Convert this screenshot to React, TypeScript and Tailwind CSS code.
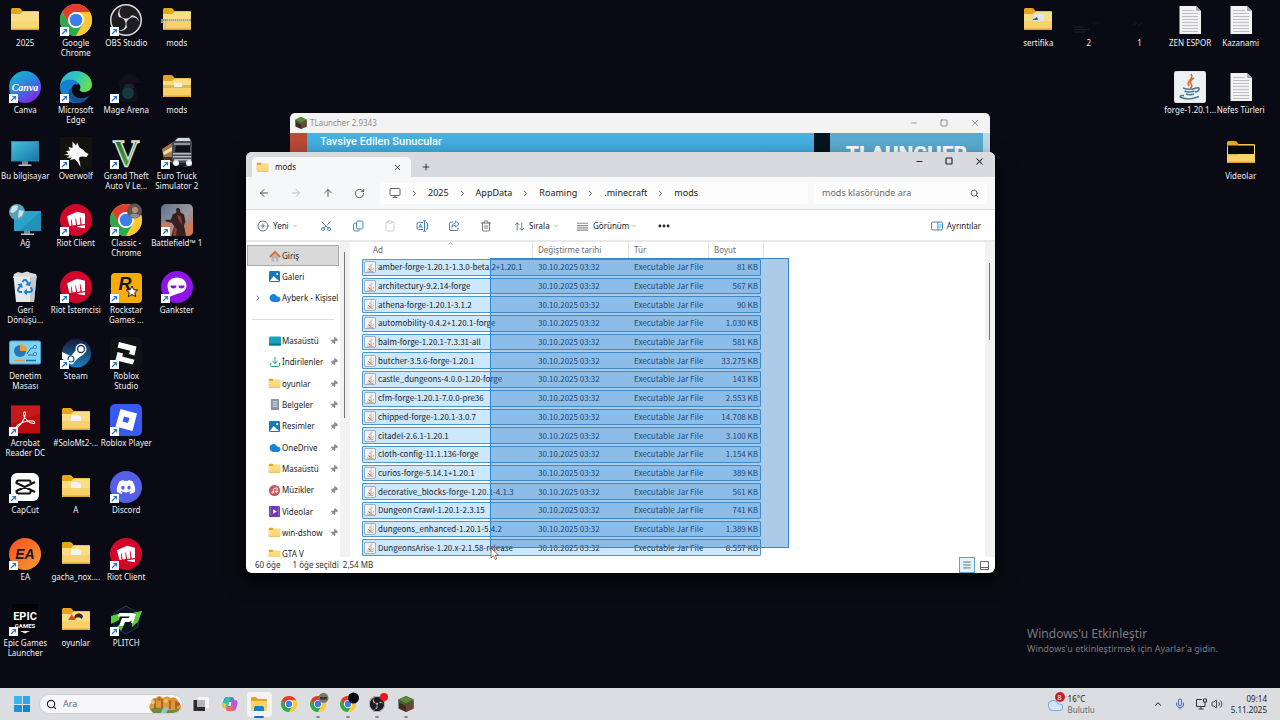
import type { ReactNode } from "react";
import {
  ArrowLeft, ArrowRight, ArrowUp, RotateCw, Monitor, ChevronRight, ChevronDown, ChevronUp, Search, X, Plus, Minus,
  Square, CirclePlus, Scissors, Copy, Clipboard, Trash2, ArrowUpDown, Ellipsis, PanelRight, Pin, Mic, Volume2,
  Cloud, Download, Music, Menu,
} from "lucide-react";
import { FaJava, FaDiscord, FaSteamSymbol, FaRecycle } from "react-icons/fa";
import { SiRiotgames, SiObsstudio } from "react-icons/si";

/* ---------- icons ---------- */

const Folder = ({ inner }: { inner?: ReactNode }) => (
  <svg viewBox="0 0 32 32" className="size-full" aria-hidden="true">
    <path d="M2 5.500Q2 4 3.500 4H10q1 0 1.500.6L13.500 7H28.500Q30 7 30 8.500V24H2z" fill="#e5a51d" />
    <path d="M2 10h9l3-2.500h16V25q0 1-1 1H3q-1 0-1-1z" fill="#f9de85" />
    {inner}
    <path d="M2 17h28v8q0 1-1 1H3q-1 0-1-1z" fill="#f6d067" opacity={inner ? 0.9 : 0.5} />
    <path d="M2 24.500h28v.5q0 1-1 1H3q-1 0-1-1z" fill="#dfa62f" />
  </svg>
);

const Chrome = ({ badge }: { badge?: ReactNode }) => (
  <svg viewBox="0 0 32 32" className="size-full overflow-visible" aria-hidden="true">
    <circle cx="16" cy="16" r="16" fill="#fcc934" />
    <path d="M2.140 8A16 16 0 0 0 16 32L22.900 20 16 16 9 20z" fill="#2da94f" />
    <path d="M16 8H29.860A16 16 0 0 1 16 32L22.900 20z" fill="#fcc934" />
    <path d="M2.140 8A16 16 0 0 1 29.860 8H16L9 20z" fill="#e33b2e" />
    <circle cx="16" cy="16" r="8" fill="#fff" />
    <circle cx="16" cy="16" r="6.300" fill="#3b7ded" />
    {badge}
  </svg>
);

const Obs = () => (
  <span className="flex size-full items-center justify-center rounded-full bg-[#1f1d22]">
    <SiObsstudio className="size-full text-[#dedede]" aria-hidden="true" />
  </span>
);

const Canva = () => (
  <svg viewBox="0 0 32 32" className="size-full" aria-hidden="true">
    <defs>
      <linearGradient id="canva" x1="0" y1="0" x2=".6" y2="1">
        <stop offset="0" stopColor="#10c4cb" /><stop offset=".55" stopColor="#2f80dd" /><stop offset="1" stopColor="#7d2ae8" />
      </linearGradient>
    </defs>
    <circle cx="16" cy="16" r="16" fill="url(#canva)" />
    <text x="16" y="19.500" textAnchor="middle" fontFamily="Liberation Serif, serif" fontStyle="italic" fontWeight="700" fontSize="10" fill="#fff">Canva</text>
  </svg>
);

const Edge = () => (
  <svg viewBox="0 0 32 32" className="size-full" aria-hidden="true">
    <defs>
      <linearGradient id="edgeTop" x1="0" y1="0" x2="1" y2=".4">
        <stop offset="0" stopColor="#2bb5e8" /><stop offset=".6" stopColor="#35c9b1" /><stop offset="1" stopColor="#66dd55" />
      </linearGradient>
    </defs>
    <path d="M0 15C1 6 7.500 0 16 0c9.500 0 16 6.500 16 13.500C32 18.500 28 21 24 21c-3 0-5-1.200-4-3 1.300-2.800-.5-7-6.500-7C7 11 2 14 0 19z" fill="url(#edgeTop)" />
    <path d="M0 16c0-5 5-8 11-7.500 4 .3 7 2.500 7.500 5.500-3-2-6.500-.5-7 4-.5 5.500 5 10.500 11 9.500 2.500-.4 4.500-1.300 6-2.300C26 30 21 32 16 32 7 32 0 25 0 16z" fill="#1580cf" />
    <path d="M11.500 17c-1 7 6 12 12 10.500 2-.5 4-1.300 5.500-2.800C26 30 21 32 17 32 9 31 5 22 11.500 17z" fill="#14529c" />
  </svg>
);

const MageArena = () => (
  <svg viewBox="0 0 32 32" className="size-full" aria-hidden="true">
    <path d="M8 11Q16 0 25 4L31 12Q20 12 10 17z" fill="#12111b" />
    <path d="M10 12h14l3 8v10H9z" fill="#0f1019" />
    <circle cx="18" cy="22" r="6" fill="#143a3f" /><path d="M15 13h7l3 4h-11z" fill="#231f2c" />
  </svg>
);

const ThisPc = () => (
  <svg viewBox="0 0 32 32" className="size-full" aria-hidden="true">
    <defs><linearGradient id="pc" x1="0" y1="0" x2="1" y2="1"><stop offset="0" stopColor="#46c3dd" /><stop offset="1" stopColor="#1673a8" /></linearGradient></defs>
    <path d="M13 24h6v4h-6z" fill="#7a8590" /><path d="M9.500 27.500h13V29h-13z" fill="#b8c1c9" />
    <rect x="2.500" y="4.500" width="27" height="19.500" fill="url(#pc)" stroke="#2c84a7" />
  </svg>
);

const Wolf = () => (
  <svg viewBox="0 0 32 32" className="size-full" aria-hidden="true">
    <path d="M0 0h32v32H0z" fill="#13120f" />
    <path d="M12.500 4.500l3.500 4 1-3 2.500 5 4 2.500 1.500 2 3.500 2-2 3-4-.5-3 .5-.5 2.500 1 3 .5 4.500-3-5-3-3-4.500 1 2-2.500-5.500.5 3.500-2.500L4 18l4.500-1.500L6 14l4-.5L8.500 10l4 1z" fill="#f7f7f7" />
  </svg>
);

const Gta = () => (
  <svg viewBox="0 0 32 32" className="size-full" aria-hidden="true">
    <defs><linearGradient id="gta" x1="0" y1="0" x2="0" y2="1"><stop offset="0" stopColor="#17622b" /><stop offset="1" stopColor="#5fae3f" /></linearGradient></defs>
    <text x="16" y="29" textAnchor="middle" fontFamily="Liberation Serif, serif" fontWeight="700" fontSize="37" fill="url(#gta)" stroke="#dfe8dc" strokeWidth="1.300">V</text>
  </svg>
);

const Truck = () => (
  <svg viewBox="0 0 32 32" className="size-full" aria-hidden="true">
    <path d="M1 12L12 5v21L3 23z" fill="#a27a4a" /><path d="M2 15l9-5v4l-8 4z" fill="#f3d9a5" /><path d="M2 20h9v4l-7-1z" fill="#3b2d22" />
    <path d="M11 6L17 .5H29l2 5V29l-6 1-14-3z" fill="#454a52" />
    <path d="M17 1h11l1.500 3H14z" fill="#d3d7dc" /><path d="M13 6h16v2H13z" fill="#8e949c" />
    <path d="M15 8.500h14V15H14z" fill="#0d1118" />
    <path d="M12 16h18v1.500H12zM12 19h18v1.500H12zM13 22h17v1.500H13z" fill="#b4bac2" />
    <circle cx="15" cy="26" r="3" fill="#dfeaf5" /><circle cx="15" cy="26" r="1.800" fill="#fff" />
    <circle cx="28" cy="26" r="3" fill="#dfeaf5" /><circle cx="28" cy="26" r="1.800" fill="#fff" /><path d="M18 26h7v3h-7z" fill="#1c1e22" />
  </svg>
);

const Network = () => (
  <svg viewBox="0 0 32 32" className="size-full" aria-hidden="true">
    <path d="M15 27h6v3h-6z" fill="#7a8590" /><path d="M12 29.500h13V31H12z" fill="#b8c1c9" />
    <rect x="5" y="7" width="27" height="20" fill="#2ba3c8" /><path d="M32 7v20H10z" fill="#1d86b1" opacity=".6" />
    <circle cx="8" cy="8" r="8" fill="#5d9fb8" /><path d="M3 3q3-3 6-1l-1 4-4 3-3-1zM10 6l5 1-2 5-4 2z" fill="#c9e4ea" />
  </svg>
);

const Riot = () => (
  <span className="flex size-full items-center justify-center rounded-full bg-[#d2062b]">
    <SiRiotgames className="size-[18px] text-white" aria-hidden="true" />
  </span>
);

const Battlefield = () => (
  <svg viewBox="0 0 32 32" className="size-full" aria-hidden="true">
    <defs><linearGradient id="bf" x1="0" y1="0" x2="1" y2="1"><stop offset="0" stopColor="#5c718a" /><stop offset=".55" stopColor="#9c98a0" /><stop offset="1" stopColor="#c9684c" /></linearGradient></defs>
    <rect width="32" height="32" rx="5" fill="url(#bf)" />
    <path d="M0 20l5-3 5 6-1 9H5q-5 0-5-5z" fill="#c77c52" />
    <path d="M15 5q2.500-2 4 .5l.5 3 3.500 2 1.500 7-1.500 4 2 10.500H10.500L13 22l-2-3-6-1.500-1-1.500 6-.5 1.500-5 4-2z" fill="#35211f" />
    <path d="M16 10l4 3 1.500 8-4-5zM13 22l3 3-1 7h-3z" fill="#8c3f2c" /><path d="M24 21l8-2v8q0 5-5 5h-1z" fill="#dc7a4a" opacity=".7" />
  </svg>
);

const Bin = () => (
  <span className="relative flex size-full items-center justify-center">
    <svg viewBox="0 0 32 32" className="absolute inset-0 size-full" aria-hidden="true">
      <path d="M5 3l4-2 4 1 5-1.500L22 2l5 1 1 4H4z" fill="#d8dade" />
      <path d="M4.500 5.500h23L25 31H7z" fill="#e6e9ec" /><path d="M21 5.500h6.500L25 31h-4z" fill="#c3c9ce" />
    </svg>
    <FaRecycle className="relative size-4 text-[#1f82cf]" aria-hidden="true" />
  </span>
);

const Rockstar = () => (
  <svg viewBox="0 0 32 32" className="size-full" aria-hidden="true">
    <rect x="1" y="2" width="31" height="30" rx="4" fill="#f8ad06" />
    <text x="15" y="19" textAnchor="middle" fontFamily="Liberation Sans, sans-serif" fontWeight="700" fontStyle="italic" fontSize="18" fill="#111">R</text>
    <path d="M22 15l1.700 3.700 4 .3-3 2.700 1 4-3.700-2.200-3.700 2.200 1-4-3-2.700 4-.3z" fill="#fff" stroke="#111" />
  </svg>
);

const Gankster = () => (
  <svg viewBox="0 0 32 32" className="size-full" aria-hidden="true">
    <circle cx="16" cy="16" r="16" fill="#8d15e8" />
    <path d="M16 6.500c6 0 9.500 4 9.500 8.500S21 22 17 22.500L8 26c2-3-1.500-6-1.500-11S10.500 6.500 16 6.500z" fill="#fff" />
    <path d="M9.500 14.500h6q0 3-3 3t-3-3zM17.500 14.500h6q0 3-3 3t-3-3z" fill="#8316d8" />
  </svg>
);

const ControlPanel = () => (
  <svg viewBox="0 0 32 32" className="size-full" aria-hidden="true">
    <rect x=".5" y="4" width="31" height="23" rx="1.500" fill="#7fd2f2" stroke="#3fa5d6" />
    <circle cx="11" cy="14" r="6" fill="#2376ba" /><path d="M11 14V7a7 7 0 0 1 7 7z" fill="#f19a38" />
    <path d="M18 17l4-6h3M19 18h6" stroke="#1d6fb0" fill="none" /><circle cx="26" cy="10" r="1.500" fill="#fff" stroke="#1d6fb0" /><circle cx="26" cy="17" r="1.500" fill="#fff" stroke="#1d6fb0" />
    <path d="M5 23.500h11" stroke="#e2994a" strokeWidth="1.500" /><path d="M17 23.500h10" stroke="#1f6eb4" strokeWidth="1.500" />
  </svg>
);

const Steam = () => (
  <svg viewBox="0 0 32 32" className="size-full" aria-hidden="true">
    <defs><linearGradient id="steam" x1="0" y1="0" x2="0" y2="1"><stop offset="0" stopColor="#14193a" /><stop offset="1" stopColor="#1d7fbf" /></linearGradient></defs>
    <circle cx="16.500" cy="16" r="14.500" fill="url(#steam)" />
    <path d="M2 15l9 4 5-6 8 4-7 5-4 5q-4 1-6-3l-5-2z" fill="#fff" />
    <circle cx="21" cy="12" r="5.500" fill="#fff" /><circle cx="21" cy="12" r="3.500" fill="#fff" stroke="#1b3158" strokeWidth="1.300" />
    <circle cx="11" cy="22" r="3" fill="none" stroke="#1c5c92" strokeWidth="1.200" />
  </svg>
);

const RobloxStudio = () => (
  <svg viewBox="0 0 32 32" className="size-full" aria-hidden="true">
    <rect width="32" height="32" rx="5" fill="#111216" />
    <path d="M9 5l17.500 4.600-2 9-5.500-1.500 1-3.300-12.500-3.300zM7.500 15l5.500 1.400-.8 3.200 12.300 3.200-1.800 4.700-17.200-4.300z" fill="#fff" />
  </svg>
);

const RobloxPlayer = () => (
  <svg viewBox="0 0 32 32" className="size-full" aria-hidden="true">
    <rect width="32" height="32" rx="5" fill="#365bf2" />
    <path fillRule="evenodd" d="M10.500 5L27 9.500 22.500 27 5.500 22.500zM14 12.500l-1.500 5 5.500 1.500 1.500-5z" fill="#fff" />
  </svg>
);

const Acrobat = () => (
  <svg viewBox="0 0 32 32" className="size-full" aria-hidden="true">
    <path d="M2 1.500h29v28H2z" fill="#b90d0f" /><path d="M2 1.500h29v8L2 20z" fill="#ce2221" opacity=".6" />
    <path d="M8 23.500c3-1 8-9 8.500-13.500.2-3-2-3-2 0 .3 4.500 6 9.500 9.500 9.500 3 0 2-3-3-2.700-4 .2-9 2-12 4.200-1.500 1.200-2 2.500-1 2.500z" fill="none" stroke="#fff" strokeWidth="1.100" />
  </svg>
);

const CapCut = () => (
  <svg viewBox="0 0 32 32" className="size-full" aria-hidden="true">
    <rect x="2" y="2" width="28" height="28" rx="6" fill="#fff" />
    <path d="M21.500 12V11Q21.500 9.500 20 9.500H9.500Q7.500 9.500 7.500 11.500V12L26 21M21.500 20v1Q21.500 22.500 20 22.500H9.500Q7.500 22.500 7.500 20.500V20L26 11" fill="none" stroke="#111" strokeWidth="2" />
  </svg>
);

const Discord = () => (
  <span className="flex size-full items-center justify-center rounded-full bg-[#5560e6]">
    <FaDiscord className="size-5 text-white" aria-hidden="true" />
  </span>
);

const Ea = () => (
  <svg viewBox="0 0 32 32" className="size-full" aria-hidden="true">
    <defs><linearGradient id="ea" x1="0" y1="0" x2="1" y2="1"><stop offset="0" stopColor="#f0501d" /><stop offset="1" stopColor="#f99b36" /></linearGradient></defs>
    <circle cx="16" cy="16" r="16" fill="url(#ea)" />
    <text x="16" y="20.500" textAnchor="middle" fontFamily="Liberation Sans, sans-serif" fontWeight="700" fontStyle="italic" fontSize="14" fill="#1a1215">EA</text>
  </svg>
);

const Epic = () => (
  <svg viewBox="0 0 32 32" className="size-full" aria-hidden="true">
    <path d="M3 0h26v26l-13 5L3 26z" fill="#030303" />
    <text x="16" y="16" textAnchor="middle" fontFamily="Roboto, sans-serif" fontWeight="700" fontSize="11" fill="#fff">EPIC</text>
    <text x="16" y="24" textAnchor="middle" fontFamily="Roboto, sans-serif" fontWeight="700" fontSize="6" fill="#fff">GAMES</text>
    <path d="M11 27h10l-5 2.500z" fill="#e8e8e8" />
  </svg>
);

const Plitch = () => (
  <svg viewBox="0 0 32 32" className="size-full" aria-hidden="true">
    <path d="M16 2l12 7v14l-12 7-12-7V9z" fill="#0a1320" stroke="#1c4254" />
    <path d="M1 12l10-3-2 7-8 4zM22 9l10-2-4 11-6 5zM7 22l8-3-4 8z" fill="#58cb3c" />
    <path d="M9 9h12q4 0 3 4t-5 5h-4l-2 4H9l3-8h7l.5-1.500H8z" fill="#fff" />
    <path d="M24 10h2l-3 9h-2z" fill="#fff" />
  </svg>
);

const TextFile = () => (
  <svg viewBox="0 0 32 32" className="size-full" aria-hidden="true">
    <path d="M5.500 2H22l5 5v23H5.500z" fill="#f3f3f3" /><path d="M22 2l5 5h-5z" fill="#a9adb1" />
    <path d="M8 6.500h12M8 9.500h16M8 12.500h16M8 15.500h16M8 18.500h16M8 21.500h16M8 24.500h16M8 27.500h16" stroke="#b7b9bc" strokeWidth=".9" />
  </svg>
);

const JavaCup = () => (
  <svg viewBox="0 0 32 32" className="size-full" aria-hidden="true">
    <rect width="32" height="32" rx="3" fill="#eef1f3" stroke="#c4cad0" strokeWidth=".6" />
    <path d="M17 3q2 3-1 6t-1 6M20 7q-5 3-3 6t-1 4" fill="none" stroke="#dd6b31" strokeWidth="1.600" />
    <path d="M9 17q7 2.500 13 0M10.500 20q5 2 10 0M12 23q4 1.500 8 0M22 17q4-1 3 1.500T21 21M6 26q0-2 4-1.500M6 26q9 4 19-.5" fill="none" stroke="#4d7790" strokeWidth="1.500" />
  </svg>
);

const DimShot = () => (
  <svg viewBox="0 0 32 32" className="size-full" aria-hidden="true">
    <path d="M1 23h10M1 25.500h15M1 28h12" stroke="#1d2028" /><path d="M20 20l8-2" stroke="#12141c" />
  </svg>
);
const DimBlank = () => (
  <svg viewBox="0 0 32 32" className="size-full" aria-hidden="true">
    <path d="M10 21l4-2M15 22l5-4" stroke="#1a1b23" />
  </svg>
);

const page = <path d="M11 11h7l3 2v8H11z" fill="#f2f2f2" />;
const zip = (
  <g>
    <path d="M2 15h28v2.500H2z" fill="#a8a18c" /><path d="M0 15h6v9H3v-5H0z" fill="#8b8b8b" /><path d="M3 16h26" stroke="#e6e4da" strokeDasharray="1 1" />
  </g>
);
const wideSheet = <g><path d="M2 14h28v3H2z" fill="#d8b65a" /><path d="M13 12h8v4h-8z" fill="#f3f1e6" /></g>;

/* ---------- desktop ---------- */

type Item = { name: ReactNode; icon: ReactNode; link?: boolean } | null;

const left: Item[] = [
  { name: "2025", icon: <Folder /> },
  { name: "Canva", icon: <Canva />, link: true },
  { name: "Bu bilgisayar", icon: <ThisPc /> },
  { name: "Ağ", icon: <Network /> },
  { name: <>Geri<br />Dönüşü...</>, icon: <Bin /> },
  { name: <>Denetim<br />Masası</>, icon: <ControlPanel /> },
  { name: <>Acrobat<br />Reader DC</>, icon: <Acrobat />, link: true },
  { name: "CapCut", icon: <CapCut />, link: true },
  { name: "EA", icon: <Ea />, link: true },
  { name: <>Epic Games<br />Launcher</>, icon: <Epic />, link: true },
  { name: <>Google<br />Chrome</>, icon: <Chrome />, link: true },
  { name: <>Microsoft<br />Edge</>, icon: <Edge />, link: true },
  { name: "Overwolf", icon: <Wolf />, link: true },
  { name: "Riot Client", icon: <Riot />, link: true },
  { name: "Riot İstemcisi", icon: <Riot />, link: true },
  { name: "Steam", icon: <Steam />, link: true },
  { name: "#SoloMt2-...", icon: <Folder inner={page} /> },
  { name: "A", icon: <Folder inner={page} /> },
  { name: "gacha_nox....", icon: <Folder inner={page} /> },
  { name: "oyunlar", icon: <Folder inner={<g><path d="M8 16l4-6 1 3 5-3-3 6z" fill="#d94a2c" /><path d="M15 11q5-4 8 1l-1 3q-3-3-7-1z" fill="#2b2b2b" /></g>} /> },
  { name: "OBS Studio", icon: <Obs />, link: true },
  { name: "Mage Arena", icon: <MageArena />, link: true },
  { name: <>Grand Theft<br />Auto V Le...</>, icon: <Gta />, link: true },
  { name: <>Classic -<br />Chrome</>, icon: <Chrome badge={<g><circle cx="24.500" cy="7" r="7.500" fill="#5e5650" /><circle cx="25" cy="6" r="3" fill="#b98f7c" /><path d="M19 12q5-5 11 0-5 4-11 0z" fill="#8a8f9c" /></g>} />, link: true },
  { name: <>Rockstar<br />Games ...</>, icon: <Rockstar />, link: true },
  { name: <>Roblox<br />Studio</>, icon: <RobloxStudio />, link: true },
  { name: "Roblox Player", icon: <RobloxPlayer />, link: true },
  { name: "Discord", icon: <Discord />, link: true },
  { name: "Riot Client", icon: <Riot />, link: true },
  { name: "PLITCH", icon: <Plitch />, link: true },
  { name: "mods", icon: <Folder inner={zip} /> },
  { name: "mods", icon: <Folder inner={wideSheet} /> },
  { name: <>Euro Truck<br />Simulator 2</>, icon: <Truck />, link: true },
  { name: "Battlefield™ 1", icon: <Battlefield />, link: true },
  { name: "Gankster", icon: <Gankster />, link: true },
];

const right: Item[] = [
  { name: "sertifika", icon: <Folder inner={<g><path d="M12 10h10v7H12z" fill="#dfe7ee" /><path d="M10 16l5-3 1 3z" fill="#2b5f8c" /></g>} /> },
  null, null,
  { name: "2", icon: <DimShot /> }, null, null,
  { name: "1", icon: <DimBlank /> }, null, null,
  { name: "ZEN ESPOR", icon: <TextFile /> },
  { name: "forge-1.20.1...", icon: <JavaCup /> },
  null,
  { name: "Kazanami", icon: <TextFile /> },
  { name: "Nefes Türleri", icon: <TextFile /> },
  { name: "Videolar", icon: <Folder inner={<path d="M3 8.500h26v8.500H14l-2 1.500H3z" fill="#070707" />} /> },
];

function DesktopIcon({ item }: { item: Item }) {
  if (!item) return <span />;
  return (
    <button className="flex min-w-0 flex-col items-center pt-1">
      <span className="relative block size-8">
        {item.icon}
        {item.link && (
          <span className="absolute bottom-0 left-0 flex size-[9px] items-center justify-center bg-white">
            <svg viewBox="0 0 9 9" className="size-full" aria-hidden="true">
              <path d="M2 7L6 3M3.500 2.500H6.500V5.500" fill="none" stroke="#2a78c4" strokeWidth="1.200" />
            </svg>
          </span>
        )}
      </span>
      <span className="mt-[2px] whitespace-nowrap text-center text-[8px] leading-[10px] text-[#f0f0f2]">{item.name}</span>
    </button>
  );
}

/* ---------- launcher window ---------- */

function Launcher() {
  return (
    <section className="absolute top-[113px] left-[290px] flex h-[60px] w-[700px] flex-col overflow-hidden rounded-t-[5px] bg-[#f3f3f3]">
      <header className="flex h-5 shrink-0 items-center pl-[5px] text-[8px] text-[#8c8c8c]">
        <span className="size-3"><GrassBlock /></span>
        <span className="ml-[3px] flex-1">TLauncher 2.9343</span>
        <button aria-label="Küçült" className="flex w-[30px] justify-center"><Minus size={8} strokeWidth={2.500} /></button>
        <button aria-label="Ekranı kapla" className="flex w-[30px] justify-center"><Square size={8} strokeWidth={3} /></button>
        <button aria-label="Kapat" className="flex w-[31px] justify-center"><X size={10} strokeWidth={2} /></button>
      </header>
      <div className="flex flex-1">
        <div className="w-[17px] bg-[#b94a37]" />
        <h2 className="flex-1 bg-linear-to-b from-[#47b2e4] to-[#3aa5da] pl-[13px] font-[Roboto,sans-serif] text-[11px] leading-[17px] font-medium text-white">
          Tavsiye Edilen Sunucular
        </h2>
        <div className="w-4 bg-[#03141d]" />
        <div className="w-[153px] overflow-hidden bg-[#5aabd0] pt-[11px] text-center font-[Roboto,sans-serif] text-[21px] leading-5 font-black text-white">
          TLAUNCHER
        </div>
        <div className="w-[7px] bg-[#b9d9e6]" />
      </div>
    </section>
  );
}

/* ---------- explorer window ---------- */

const files: [string, string][] = [
  ["amber-forge-1.20.1-1.3.0-beta.2+1.20.1", "81 KB"],
  ["architectury-9.2.14-forge", "567 KB"],
  ["athena-forge-1.20.1-3.1.2", "90 KB"],
  ["automobility-0.4.2+1.20.1-forge", "1.030 KB"],
  ["balm-forge-1.20.1-7.3.31-all", "581 KB"],
  ["butcher-3.5.6-forge-1.20.1", "33.275 KB"],
  ["castle_dungeons-4.0.0-1.20-forge", "143 KB"],
  ["cfm-forge-1.20.1-7.0.0-pre36", "2.553 KB"],
  ["chipped-forge-1.20.1-3.0.7", "14.708 KB"],
  ["citadel-2.6.1-1.20.1", "3.100 KB"],
  ["cloth-config-11.1.136-forge", "1.154 KB"],
  ["curios-forge-5.14.1+1.20.1", "389 KB"],
  ["decorative_blocks-forge-1.20.1-4.1.3", "561 KB"],
  ["Dungeon Crawl-1.20.1-2.3.15", "741 KB"],
  ["dungeons_enhanced-1.20.1-5.4.2", "1.389 KB"],
  ["DungeonsArise-1.20.x-2.1.58-release", "8.557 KB"],
];

const OneDrive = () => <Cloud size={12} className="fill-[#1683dc] text-[#1683dc]" />;
const Home = () => (
  <svg viewBox="0 0 12 12" className="size-[12px]" aria-hidden="true">
    <path d="M2.500 5.500v6h2.500V8h2v3.500h2.500v-6L6 2.500z" fill="#b9b4b4" />
    <path d="M.8 7L6 1.800 11.200 7" fill="none" stroke="#dc6f2b" strokeWidth="1.800" />
  </svg>
);
const Picture = () => (
  <svg viewBox="0 0 12 12" className="size-[11px]" aria-hidden="true">
    <rect width="12" height="12" rx="1.500" fill="#1579bd" /><path d="M1 11l4-5.500L11 11z" fill="#fff" /><circle cx="9" cy="3.500" r="1.200" fill="#fff" />
  </svg>
);
const Doc = () => (
  <svg viewBox="0 0 12 12" className="size-[11px]" aria-hidden="true">
    <rect x="2" y="0" width="9" height="12" rx="1" fill="#8496a8" /><path d="M4 3h5M4 5.500h5M4 8h5" stroke="#e6ecf2" />
  </svg>
);
const DesktopGlyph = () => (
  <svg viewBox="0 0 12 12" className="size-[12px]" aria-hidden="true">
    <rect x="0" y="1.500" width="12" height="9" rx="1" fill="#17a3b8" /><path d="M0 8.500h12v1q0 1-1 1H1q-1 0-1-1z" fill="#0d6f92" />
  </svg>
);
const VideoGlyph = () => (
  <svg viewBox="0 0 12 12" className="size-[11px]" aria-hidden="true">
    <rect width="12" height="12" rx="1" fill="#7138bd" /><path d="M4.500 3.500l4 2.500-4 2.500z" fill="#fff" /><path d="M1.500 1v10M10.500 1v10" stroke="#c7a6ee" strokeDasharray="1 1" />
  </svg>
);
const MusicGlyph = () => (
  <span className="flex size-[11px] items-center justify-center rounded-full bg-[#c9565f]"><Music size={7} strokeWidth={3} className="text-white" /></span>
);
const SmallFolder = () => <span className="block size-[13px]"><Folder /></span>;

const places: { name: string; icon: ReactNode; pin?: boolean; open?: boolean; active?: boolean }[] = [
  { name: "Giriş", icon: <Home />, active: true },
  { name: "Galeri", icon: <Picture /> },
  { name: "Ayberk - Kişisel", icon: <OneDrive />, open: true },
  { name: "", icon: null },
  { name: "Masaüstü", icon: <DesktopGlyph />, pin: true },
  { name: "İndirilenler", icon: <Download size={12} strokeWidth={2} className="text-[#22a67c]" />, pin: true },
  { name: "oyunlar", icon: <SmallFolder />, pin: true },
  { name: "Belgeler", icon: <Doc />, pin: true },
  { name: "Resimler", icon: <Picture />, pin: true },
  { name: "OneDrive", icon: <OneDrive />, pin: true },
  { name: "Masaüstü", icon: <SmallFolder />, pin: true },
  { name: "Müzikler", icon: <MusicGlyph />, pin: true },
  { name: "Videolar", icon: <VideoGlyph />, pin: true },
  { name: "win-dshow", icon: <SmallFolder />, pin: true },
  { name: "GTA V", icon: <SmallFolder /> },
];

function Sidebar() {
  return (
    <nav className="relative w-[104px] shrink-0 overflow-hidden pt-[3px] pl-px text-[8px] text-[#222]" aria-label="Gezinti">
      <ul className="flex h-[320px] w-[92px] flex-col">
        {places.map((p, i) =>
          p.icon === null ? (
            <li key={i} className="flex flex-1 items-center px-[5px]"><hr className="w-full border-[#dcdcdc]" /></li>
          ) : (
            <li key={i} className="flex min-h-0 flex-1">
              <button className={`flex w-full items-center whitespace-nowrap ${p.active ? "border border-[#a9a9a9] bg-[#d9d9d9]" : "border border-transparent"}`}>
                <span className="flex w-5 shrink-0 justify-center">{p.open && <ChevronRight size={8} strokeWidth={2.500} className="text-[#555]" />}</span>
                <span className="flex w-[13px] shrink-0 items-center justify-center">{p.icon}</span>
                <span className="ml-px flex-1 text-left">{p.name}</span>
                {p.pin && <Pin size={8} className="shrink-0 rotate-45 fill-[#8a8a8a] text-[#8a8a8a]" />}
              </button>
            </li>
          ),
        )}
      </ul>
      <div className="absolute inset-y-0 right-0 w-[10px] bg-[#f2f2f2]" />
      <div className="absolute top-[10px] right-[5px] h-[166px] w-px bg-[#777]" />
    </nav>
  );
}

const columns = "grid grid-cols-[171px_96px_80px_1fr]";

function FileList() {
  return (
    <div className="relative flex min-w-0 flex-1 pl-3">
      <table className="block w-[402px] text-[8px]">
        <thead className="block text-[#6a6a6a]">
          <tr className={`${columns} h-[17px] items-stretch text-left leading-[16px]`}>
            <th className="relative border-r border-[#e3e3e3] pl-[11px] font-normal">
              Ad
              <ChevronUp size={7} className="absolute -top-[2px] left-[85px] text-[#666]" />
            </th>
            <th className="border-r border-[#e3e3e3] pl-[5px] font-normal">Değiştirme tarihi</th>
            <th className="border-r border-[#e3e3e3] pl-[5px] font-normal">Tür</th>
            <th className="border-r border-[#e3e3e3] pl-[5px] font-normal">Boyut</th>
          </tr>
        </thead>
        <tbody className="mr-[3px] flex h-[297px] flex-col gap-[2px] font-['Noto_Sans_CJK_SC',sans-serif] text-[#1d2b3a]">
          {files.map(([name, size]) => (
            <tr key={name} className={`${columns} min-h-0 flex-1 items-center rounded-[1px] border border-[#4a97d2] bg-[#cce8ff] leading-[14px] whitespace-nowrap`}>
              <td className="flex items-center gap-[2px] pl-px text-[#1a1a1a]">
                <span className="flex size-3 items-center justify-center rounded-[1px] border border-[#9db0c0] bg-[#f1f2f3]">
                  <FaJava className="size-[9px] text-[#a8613f]" aria-hidden="true" />
                </span>
                {name}
              </td>
              <td className="pl-1">30.10.2025 03:32</td>
              <td className="pl-1">Executable Jar File</td>
              <td className="pr-[2px] text-right">{size}</td>
            </tr>
          ))}
        </tbody>
      </table>
      <div className="absolute top-[16px] left-[140px] h-[290px] w-[299px] border border-[#2f86cd] bg-[#2477c4]/38" />
      <svg viewBox="0 0 10 14" className="absolute top-[305px] left-[140px] h-[14px] w-[10px]" aria-hidden="true">
        <path d="M1 1v10l2.500-2.200L5.200 12.500l1.600-.7L5.200 8.200H8.500z" fill="#fff" stroke="#444" strokeWidth=".7" />
      </svg>
      <div className="ml-auto w-[10px] bg-[#f2f2f2] pt-[21px]"><div className="ml-1 h-[77px] w-px bg-[#777]" /></div>
    </div>
  );
}

const Rule = () => <span className="h-[22px] w-px bg-[#ececec]" />;

function Explorer() {
  const crumbs = ["2025", "AppData", "Roaming", ".minecraft", "mods"];
  return (
    <main className="absolute top-[152px] left-[246px] flex h-[421px] w-[749px] flex-col overflow-hidden rounded-[6px] bg-white text-[#222] shadow-[0_8px_20px_rgba(0,0,0,0.6)]">
      <header className="flex h-[25px] shrink-0 bg-[#d9dadd] pl-[6px]">
        <div className="mt-[5px] flex w-[159px] items-center rounded-t-[5px] bg-[#f6f7f8] pr-[9px] pl-[4px] text-[8px]">
          <span className="size-[13px]"><Folder /></span>
          <span className="ml-[6px] flex-1 leading-5">mods</span>
          <button aria-label="Sekmeyi kapat"><X size={9} strokeWidth={2.200} /></button>
        </div>
        <button aria-label="Yeni sekme" className="mt-[5px] ml-[10px]"><Plus size={10} strokeWidth={2} /></button>
        <div className="mt-px ml-auto flex h-4 items-center pr-px">
          <button aria-label="Küçült" className="flex w-[30px] justify-center"><Minus size={9} strokeWidth={2.500} /></button>
          <button aria-label="Ekranı kapla" className="flex w-[30px] justify-center"><Square size={8} strokeWidth={3.500} /></button>
          <button aria-label="Kapat" className="flex w-[30px] justify-center"><X size={11} strokeWidth={2.200} /></button>
        </div>
      </header>

      <div className="flex h-[33px] shrink-0 items-center border-b border-[#e0e0e0] bg-[#f6f7f8] pr-2 pl-3 text-[#444]">
        <div className="flex w-[122px] shrink-0 gap-5">
          <button aria-label="Geri"><ArrowLeft size={12} strokeWidth={1.800} /></button>
          <button aria-label="İleri" className="text-[#b9b9b9]"><ArrowRight size={12} strokeWidth={1.800} /></button>
          <button aria-label="Yukarı"><ArrowUp size={12} strokeWidth={1.800} /></button>
          <button aria-label="Yenile"><RotateCw size={11} strokeWidth={1.800} /></button>
        </div>
        <div className="flex h-[21px] min-w-0 flex-1 items-center rounded-[3px] bg-[#fdfdfd] pl-[9px] text-[9px] text-[#222]">
          <Monitor size={12} strokeWidth={1.800} className="shrink-0 text-[#555]" />
          {crumbs.map((c) => (
            <span key={c} className="flex items-center whitespace-nowrap">
              <ChevronRight size={9} strokeWidth={2.200} className="mx-[9px] text-[#444]" />
              <a href={`#${c}`}>{c}</a>
            </span>
          ))}
        </div>
        <label className="ml-[6px] flex h-[21px] w-[173px] shrink-0 items-center rounded-[3px] bg-[#fdfdfd] px-2">
          <input type="text" aria-label="mods klasöründe ara" placeholder="mods klasöründe ara" className="min-w-0 flex-1 bg-transparent text-[9px] outline-none placeholder:text-[#6a6a6a]" />
          <Search size={9} strokeWidth={2.200} />
        </label>
      </div>

      <div className="flex h-8 shrink-0 items-center border-b-2 border-[#e8e8e8] pt-[2px] pr-[14px] pl-[11px] text-[8px]">
        <button className="flex w-[41px] items-center"><CirclePlus size={12} strokeWidth={1.800} className="mr-[4px] text-[#4b6a85]" />Yeni<ChevronDown size={6} className="ml-auto text-[#777]" /></button>
        <span className="ml-[9px]"><Rule /></span>
        <div className="ml-[13px] flex w-[172px] justify-between text-[#3d79a8]">
          <button aria-label="Kes"><Scissors size={12} strokeWidth={1.800} className="-rotate-90" /></button>
          <button aria-label="Kopyala"><CopyGlyph /></button>
          <button aria-label="Yapıştır" className="text-[#c4c9ce]"><Clipboard size={12} strokeWidth={1.800} /></button>
          <button aria-label="Yeniden adlandır"><RenameGlyph /></button>
          <button aria-label="Paylaş"><ShareGlyph /></button>
          <button aria-label="Sil" className="text-[#666]"><Trash2 size={12} strokeWidth={1.800} /></button>
        </div>
        <span className="ml-[12px]"><Rule /></span>
        <button className="ml-[10px] flex w-[45px] items-center"><ArrowUpDown size={11} strokeWidth={1.800} className="mr-[4px] text-[#4b6a85]" />Sırala<ChevronDown size={6} className="ml-auto text-[#777]" /></button>
        <button className="ml-[18px] flex w-[60px] items-center"><Lines />Görünüm<ChevronDown size={6} className="ml-auto text-[#777]" /></button>
        <span className="ml-[10px]"><Rule /></span>
        <button aria-label="Diğer" className="ml-[10px]"><Ellipsis size={14} strokeWidth={3} /></button>
        <button className="ml-auto flex items-center gap-[4px]"><DetailsGlyph />Ayrıntılar</button>
      </div>

      <div className="flex min-h-0 flex-1">
        <Sidebar />
        <FileList />
      </div>

      <footer className="flex h-4 shrink-0 items-center pr-[5px] pl-[9px] text-[8px] text-[#333]">
        <span>60 öğe</span>
        <span className="ml-[12px]">1 öğe seçildi</span>
        <span className="ml-1">2,54 MB</span>
        <button aria-label="Ayrıntı görünümü" className="ml-auto flex size-4 items-center justify-center border border-[#5ba6bf] bg-[#e0f4fa]"><Menu size={10} strokeWidth={2} className="text-[#555]" /></button>
        <button aria-label="Büyük simgeler" className="ml-[3px] flex size-3 items-center justify-center">
          <svg viewBox="0 0 9 9" className="size-[9px]" fill="none" stroke="#666" aria-hidden="true"><path d="M.5.500h8v8h-8zM.5 6.500h8" /></svg>
        </button>
      </footer>
    </main>
  );
}

const CopyGlyph = () => (
  <svg viewBox="0 0 12 12" className="size-3" fill="none" stroke="#3c86bd" aria-hidden="true">
    <rect x="4.500" y="1" width="6.500" height="8" rx="1.500" /><path d="M4 3.200H3Q1.500 3.200 1.500 4.700v4.500Q1.500 11 3.300 11H6Q7.500 11 7.500 9.500" stroke="#6a7f90" />
  </svg>
);

const RenameGlyph = () => (
  <svg viewBox="0 0 12 12" className="size-3" fill="none" aria-hidden="true">
    <path d="M7 2.500H2.500Q1 2.500 1 4v4q0 1.500 1.500 1.500H7M10 2.500q1.500 0 1.500 1.500v4Q11.500 9.500 10 9.500" stroke="#5b7d98" />
    <path d="M8.500 1v10M7 .8h3M7 11.200h3" stroke="#2e86c9" /><path d="M2.800 8L4.500 4 6.200 8M3.300 6.700h2.400" stroke="#2e86c9" strokeWidth=".9" />
  </svg>
);

const ShareGlyph = () => (
  <svg viewBox="0 0 12 12" className="size-3" aria-hidden="true">
    <path d="M5 2H3Q1.500 2 1.500 3.500v5.500Q1.500 10.500 3 10.500h5.500Q10 10.500 10 9V8" fill="none" stroke="#5c7f9a" />
    <path d="M7.500 1l3.500 3-3.500 3V5.200Q5 5.200 3.800 7.500 4 3.200 7.500 2.900z" fill="none" stroke="#2e86c9" strokeWidth=".9" strokeLinejoin="round" />
  </svg>
);

const DetailsGlyph = () => (
  <svg viewBox="0 0 12 12" className="size-3" fill="none" aria-hidden="true">
    <path d="M7 2H2Q.5 2 .5 3.500v5Q.5 10 2 10h5" stroke="#6d7f8e" />
    <path d="M7 2h3q1.500 0 1.500 1.500v5Q11.500 10 10 10H7zM8.500 5H10M8.500 7H10" stroke="#2e86c9" />
  </svg>
);

const Lines = () => (
  <svg viewBox="0 0 12 12" className="mr-[5px] size-[11px]" aria-hidden="true">
    <path d="M0 2.500h12M0 5h12M0 7.500h12M0 10h12" stroke="#8d8d8d" strokeWidth="1.200" />
  </svg>
);

/* ---------- taskbar ---------- */

const GrassBlock = () => (
  <svg viewBox="0 0 16 16" className="size-full" aria-hidden="true">
    <path d="M8 0l7.500 3.500v9L8 16 .5 12.500v-9z" fill="#3f2b20" />
    <path d="M8 0l7.500 3.500L8 7.500.5 3.500z" fill="#5c8a3c" /><path d="M.5 3.500L8 7.500V10L.5 6zM15.500 3.500L8 7.500V9l7.500-3z" fill="#43692b" />
    <path d="M8 9l7.500-3v6.500L8 16z" fill="#6b4634" />
  </svg>
);

const TaskView = () => (
  <svg viewBox="0 0 16 16" className="size-full" aria-hidden="true">
    <path d="M5 1h11v11H5z" fill="#f4f4f5" /><path d="M.5 4H5v7h7v4H.5z" fill="#2c2c2c" /><path d="M4 4h8v7H4z" fill="#b7b7b9" />
  </svg>
);

const Copilot = () => (
  <svg viewBox="0 0 16 16" className="size-full" aria-hidden="true">
    <path d="M5 1h5q1.500 0 2 2l.5 2H9L7 12H3Q0 12 .5 8L2 3q.7-2 3-2z" fill="#2c8fe0" />
    <path d="M5 1h4L6.500 10Q6 12 3 12 0 11.500.5 8z" fill="#38bfa4" /><path d="M0 8q2-2 4 0l1 4H3Q0 12 0 8z" fill="#efc13f" />
    <path d="M11 15H6q-1.500 0-2-2l-.5-2H7l2-7h4q3 0 2.500 4L14 13q-.7 2-3 2z" fill="#c056d6" />
    <path d="M11 15H6q-1.500 0-2-2l-.5-2H7l4-2z" fill="#ee6a65" />
    <path d="M7.200 6h2.200L8.600 10H6.400z" fill="#fff" />
  </svg>
);

const ExplorerGlyph = () => (
  <svg viewBox="0 0 16 16" className="size-full" aria-hidden="true">
    <path d="M0 2q0-1 1-1h4l2 2h8q1 0 1 1v4H0z" fill="#e2a41f" /><path d="M0 5h16v9q0 1-1 1H1q-1 0-1-1z" fill="#fbd35e" />
    <path d="M3 11.500Q3 10 4.500 10h7q1.500 0 1.500 1.500V15H3z" fill="#1b7fc4" />
  </svg>
);

const apps: { name: string; icon: ReactNode; active?: boolean; running?: boolean }[] = [
  { name: "Görev görünümü", icon: <TaskView /> },
  { name: "Copilot", icon: <Copilot /> },
  { name: "Dosya Gezgini", icon: <ExplorerGlyph />, active: true },
  { name: "Chrome", icon: <Chrome /> },
  { name: "Chrome profil", icon: <Chrome badge={<g><circle cx="27" cy="4" r="10" fill="#77766b" /><path d="M20 2h14v5H20z" fill="#34342f" /></g>} />, running: true },
  { name: "Chrome ikinci profil", icon: <Chrome badge={<circle cx="27" cy="4" r="11" fill="#04060c" />} />, running: true },
  { name: "OBS", icon: <span className="relative block size-full"><Obs /><span className="absolute -top-[3px] -right-[3px] size-[8px] rounded-full bg-[#f0141e]" /></span>, running: true },
  { name: "TLauncher", icon: <GrassBlock />, running: true },
];

function Taskbar() {
  return (
    <footer className="z-10 flex h-8 shrink-0 items-center bg-[#dcdde1] pr-[13px] pl-[14px] text-[#222]">
      <button aria-label="Başlat" className="grid size-4 shrink-0 grid-cols-2 gap-px">
        <span className="bg-[#3cb4ee]" /><span className="bg-[#2ba5e6]" /><span className="bg-[#1b94dc]" /><span className="bg-[#0f84d0]" />
      </button>
      <label className="ml-[9px] flex h-5 w-[144px] shrink-0 items-center overflow-hidden rounded-full border border-[#cfd0d4] bg-[#f7f7f9] pl-[6px]">
        <Search size={11} strokeWidth={2.400} className="shrink-0" />
        <input type="text" aria-label="Ara" placeholder="Ara" className="ml-[6px] min-w-0 flex-1 bg-transparent text-[9px] outline-none placeholder:text-[#666]" />
        <svg viewBox="0 0 34 18" className="h-[18px] w-[34px] shrink-0" aria-hidden="true">
          <path d="M2 14q-2-3 1-6 0-5 5-5 3-4 7 0 4-3 8 0 7-1 8 5 4 3 1 7l-3 2H5z" fill="#dd9b3a" />
          <path d="M2 14q8-3 15 0t15-1l-3 5H5z" fill="#6f8a3c" /><path d="M13 18q1-4 4-6l4 1-3 5z" fill="#8fc4cf" />
          <path d="M7 4v10M14 4v9M22 5v9M28 6v8" stroke="#7a4b2c" strokeWidth="1.200" />
          <circle cx="5" cy="7" r="2" fill="#f3c96a" /><circle cx="11" cy="4" r="2" fill="#c96a2b" /><circle cx="18" cy="6" r="2" fill="#f1bf55" /><circle cx="25" cy="5" r="2.500" fill="#e58a2c" /><circle cx="30" cy="9" r="2" fill="#b95a25" />
        </svg>
      </label>
      <div className="ml-[5px] flex w-[231px] shrink-0 justify-between">
        {apps.map((a) => (
          <button key={a.name} aria-label={a.name} className={`relative flex size-[25px] items-center justify-center rounded-[3px] ${a.active ? "bg-[#f3f3f5]" : ""}`}>
            <span className="size-4">{a.icon}</span>
            {a.active && <span className="absolute -bottom-px h-[2px] w-[10px] rounded bg-[#1271bd]" />}
            {a.running && <span className="absolute -bottom-px h-[2px] w-1 rounded bg-[#8a8b8f]" />}
          </button>
        ))}
      </div>

      <div className="ml-auto flex items-center">
        <button className="flex items-center text-left text-[8px] leading-[11px]">
          <span className="relative mr-[3px] flex h-5 w-[18px] items-end">
            <Cloud size={17} strokeWidth={1.500} className="fill-[#d3e4f8] text-[#7faee4]" />
            <span className="absolute -top-[2px] right-0 flex size-[10px] items-center justify-center rounded-full bg-[#c0202b] text-[7px] text-white">8</span>
          </span>
          <span>16°C<br /><span className="text-[#666]">Bulutlu</span></span>
        </button>
        <div className="ml-[58px] flex items-center text-[#333]">
          <button aria-label="Gizli simgeler"><ChevronUp size={10} strokeWidth={2.500} /></button>
          <button aria-label="Mikrofon" className="ml-[11px] text-[#4a72b0]"><Mic size={12} strokeWidth={2.200} /></button>
          <button aria-label="Ağ" className="ml-[9px]">
            <svg viewBox="0 0 12 12" className="size-3" fill="none" stroke="currentColor" aria-hidden="true">
              <path d="M7 1.500H1.500v7h8.500V6M3.500 11h5M6 8.500V11M8.500 1h3v3h-3zM10 4v2" />
            </svg>
          </button>
          <button aria-label="Ses" className="ml-[4px]"><Volume2 size={12} strokeWidth={1.800} /></button>
        </div>
        <button className="ml-2 text-right text-[8px] leading-[11px]">09:14<br />5.11.2025</button>
      </div>
    </footer>
  );
}

export default function App() {
  return (
    <div className="flex h-screen flex-col overflow-hidden bg-[#090a13] font-['Noto_Sans',sans-serif]">
      <div className="relative flex min-h-0 flex-1 items-start justify-between">
        <div className="grid h-[667px] w-[202px] grid-flow-col grid-cols-4 grid-rows-10">
          {left.map((item, i) => <DesktopIcon key={i} item={item} />)}
        </div>
        <div className="mr-[14px] grid h-[200px] w-[253px] grid-flow-col grid-cols-5 grid-rows-3">
          {right.map((item, i) => <DesktopIcon key={i} item={item} />)}
        </div>
        <Launcher />
        <Explorer />
        <div className="absolute right-[62px] bottom-[32px] text-[#7b7c81]">
          <p className="text-[12px] leading-[17px]">Windows'u Etkinleştir</p>
          <p className="text-[9px] leading-[14px]">Windows'u etkinleştirmek için Ayarlar'a gidin.</p>
        </div>
      </div>
      <Taskbar />
    </div>
  );
}
